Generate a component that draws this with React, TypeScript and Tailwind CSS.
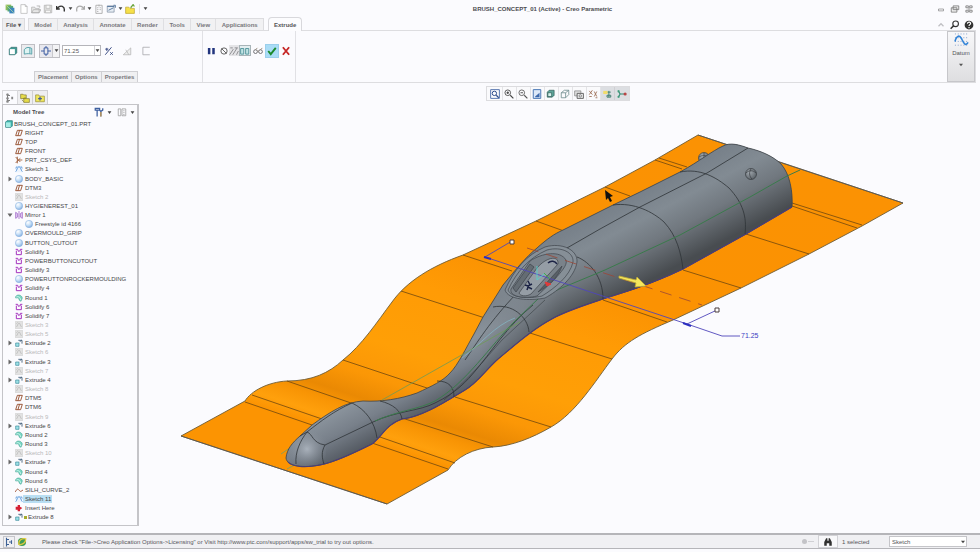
import React from "react";

type IconName =
  | "part" | "plane" | "csys" | "sketch" | "sketchOff" | "sphere" | "mirror"
  | "solidify" | "round" | "extrude" | "curve" | "insert";

type Node = { label: string; icon: IconName; depth?: 0 | 1 | 2; toggle?: "open" | "closed"; selected?: boolean; mark?: boolean };

const NODES: Node[] = [
  { label: "BRUSH_CONCEPT_01.PRT", icon: "part", depth: 0 },
  { label: "RIGHT", icon: "plane" },
  { label: "TOP", icon: "plane" },
  { label: "FRONT", icon: "plane" },
  { label: "PRT_CSYS_DEF", icon: "csys" },
  { label: "Sketch 1", icon: "sketch" },
  { label: "BODY_BASIC", icon: "sphere", toggle: "closed" },
  { label: "DTM3", icon: "plane" },
  { label: "Sketch 2", icon: "sketchOff" },
  { label: "HYGIENEREST_01", icon: "sphere" },
  { label: "Mirror 1", icon: "mirror", toggle: "open" },
  { label: "Freestyle id 4166", icon: "sphere", depth: 2 },
  { label: "OVERMOULD_GRIP", icon: "sphere" },
  { label: "BUTTON_CUTOUT", icon: "sphere" },
  { label: "Solidify 1", icon: "solidify" },
  { label: "POWERBUTTONCUTOUT", icon: "solidify" },
  { label: "Solidify 3", icon: "solidify" },
  { label: "POWERUTTONROCKERMOULDING", icon: "sphere" },
  { label: "Solidify 4", icon: "solidify" },
  { label: "Round 1", icon: "round" },
  { label: "Solidify 6", icon: "solidify" },
  { label: "Solidify 7", icon: "solidify" },
  { label: "Sketch 3", icon: "sketchOff" },
  { label: "Sketch 5", icon: "sketchOff" },
  { label: "Extrude 2", icon: "extrude", toggle: "closed" },
  { label: "Sketch 6", icon: "sketchOff" },
  { label: "Extrude 3", icon: "extrude", toggle: "closed" },
  { label: "Sketch 7", icon: "sketchOff" },
  { label: "Extrude 4", icon: "extrude", toggle: "closed" },
  { label: "Sketch 8", icon: "sketchOff" },
  { label: "DTM5", icon: "plane" },
  { label: "DTM6", icon: "plane" },
  { label: "Sketch 9", icon: "sketchOff" },
  { label: "Extrude 6", icon: "extrude", toggle: "closed" },
  { label: "Round 2", icon: "round" },
  { label: "Round 3", icon: "round" },
  { label: "Sketch 10", icon: "sketchOff" },
  { label: "Extrude 7", icon: "extrude", toggle: "closed" },
  { label: "Round 4", icon: "round" },
  { label: "Round 6", icon: "round" },
  { label: "SILH_CURVE_2", icon: "curve" },
  { label: "Sketch 11", icon: "sketch", selected: true },
  { label: "Insert Here", icon: "insert" },
  { label: "Extrude 8", icon: "extrude", toggle: "closed", mark: true },
];

const TREE_ART: Record<IconName, React.ReactNode> = {
  part: (<><path d="M1 3 3 1h8v8l-2 2H1z" fill="#3fb8b0" stroke="#1d6f70" /><path d="M1.500 3.500h7v7h-7z" fill="#a5ece4" /></>),
  plane: <path d="M3.600 2H11L8.400 10H1zM6.800 2 4.400 10" fill="none" stroke="#96502f" strokeWidth="1.4" />,
  csys: <path d="M1 1.500 5 6 1 10.500M3.500 1v10M5 6h6M8 3.500 5 6l3 3" fill="none" stroke="#9c5a36" strokeWidth="1.3" />,
  sketch: (<><path d="M1 1h10v10H1z" fill="#edf4fd" /><path d="M1 10C3 9 3 2.500 6 2.500S9 9 11 10M1 5l2-3M9 2l2 3" fill="none" stroke="#3f86d4" strokeWidth="1.2" /></>),
  sketchOff: (<><path d="M.5.5h11v11H.5z" fill="#e2e2e2" stroke="#d0d0d0" /><path d="M2 9C4 8 4 3 6 3s2 5 4 6M2 4l2-2" fill="none" stroke="#b4b4b4" /></>),
  sphere: <circle cx="6" cy="6" r="5.500" fill="url(#ball)" stroke="#86aede" strokeWidth=".7" />,
  mirror: <path d="M6 0v12M1 2l3 2v5L1 11zM11 2 8 4v5l3 2z" fill="#e3d0f4" stroke="#9a5bc4" strokeWidth="1.1" />,
  solidify: <path d="M2 4V10h7.500V4M1 2h3l1 3 3-1V2h3" fill="none" stroke="#a431bd" strokeWidth="1.5" />,
  round: (<><path d="M1 4C3 0 10 1 11 6L9 11 6 9C7 7 5 5 1 6z" fill="#79d8c4" stroke="#3a9b8b" strokeWidth=".8" /><path d="M2 4.500C5 3 8 5 8.500 9" fill="none" stroke="#eafffa" /></>),
  extrude: (<><path d="M1 6h5v5H1z" fill="#9ee3e8" stroke="#3a8a9a" /><path d="M5 2h5.500v5M7 4l3.500-2.500" fill="none" stroke="#4b6680" strokeWidth="1.4" /></>),
  curve: <path d="M0 9 3 5C5 3 7 9 9 8l3-2" fill="none" stroke="#a2573a" strokeWidth="1.4" />,
  insert: <path d="M4 1.500h3.500V4L11 6 7.500 8.500V11H4V8.500H1V4h3z" fill="#d51f33" />,
};

function TreeRow({ node }: { node: Node }) {
  const depth = node.depth ?? 1;
  const pad = depth === 0 ? "w-[2px]" : depth === 1 ? "w-3 pl-1" : "w-[22px]";
  const tone = node.icon === "sketchOff" ? "text-[#b9b9bb]" : "text-[#454547]";
  return (
    <li className="flex min-h-0 flex-1 items-center leading-[8px]">
      <span className={`flex shrink-0 justify-start ${pad}`}>
        {node.toggle && (
          <button aria-label={`Toggle ${node.label}`} className="h-[6px] w-[6px]">
            <svg viewBox="0 0 6 6" className="h-[6px] w-[6px]">
              <path d={node.toggle === "open" ? "M.5 1.500h5L3 5z" : "M1.500.5v5L5 3z"} fill="#666" />
            </svg>
          </button>
        )}
      </span>
      <svg viewBox="0 0 12 12" className="h-2 w-2 shrink-0">{TREE_ART[node.icon]}</svg>
      {node.mark && <span className="ml-px h-[3px] w-[3px] bg-[#a5ac2c]" />}
      <span className={`pr-px ${depth === 0 || node.mark ? "pl-px" : "pl-[2px]"} ${tone} ${node.selected ? "bg-[#b9def2]" : ""}`}>{node.label}</span>
    </li>
  );
}

type ArtProps = { children: React.ReactNode; label: string; className?: string; box?: string };
function Tool({ children, label, className = "", box = "h-[10px] w-[10px]" }: ArtProps) {
  return (
    <button aria-label={label} title={label} className={`flex shrink-0 items-center justify-center ${className}`}>
      <svg viewBox="0 0 16 16" fill="none" className={box}>{children}</svg>
    </button>
  );
}

const Caret = ({ label }: { label: string }) => (
  <Tool label={label} box="h-[5px] w-[5px]"><path d="M2 4h12L8 13z" fill="#444" /></Tool>
);

function TitleBar() {
  return (
    <header className="grid h-[17px] shrink-0 grid-cols-[9fr_auto_7fr] items-center">
      <div className="flex items-center pl-[5px]">
        <Tool label="Application" className="mr-1"><path d="M1 1h9v9H1z" fill="#8fbe59" /><path d="M4 3h9v9H4z" fill="#58a87a" /><path d="M7 6h8v9H7z" fill="#3d87bd" /><path d="m2 2 12 12" stroke="#cfe5a0" /></Tool>
        <Tool label="New" className="mr-[2px]"><path d="M3 1h7l3 3v11H3zM10 1v3h3" stroke="#aaa" fill="#fff" /></Tool>
        <Tool label="Open" className="mr-[2px]"><path d="M1 14V5h5l1 2h6v7zM1 14l3-5h12l-3 5zM9 3h5v3" stroke="#a5a5a5" fill="#e6e6e6" /></Tool>
        <Tool label="Save" className="mr-[3px]"><path d="M2 2h12v12H2z" fill="#ddd" stroke="#aaa" /><path d="M5 2h6v5H5zM4 10h8v4H4z" fill="#f7f7f7" stroke="#b4b4b4" /></Tool>
        <Tool label="Undo" className="mr-[2px]"><path d="M2 7c5-6 13-4 11 5M1 3v5h5" stroke="#333" strokeWidth="2.2" /></Tool>
        <Caret label="Undo history" />
        <Tool label="Redo" className="mr-[2px] ml-[2px]"><path d="M14 7C9 1 1 3 3 12M15 3v5h-5" stroke="#aaa" strokeWidth="2" /></Tool>
        <Caret label="Redo history" />
        <Tool label="Regenerate" className="mr-[2px] ml-[2px]"><path d="M3 2h10v13H3zM5 6h2M9 6h2M5 9h2M9 9h2M5 12h2M8 1v3" stroke="#aaa" strokeWidth="1.4" /></Tool>
        <Tool label="Windows" className="mr-[2px]"><path d="M2 3h11v10H2z" fill="#e7edf4" stroke="#6d7f94" /><path d="M2 4h11M4 10l8-4M12 2h3v4" stroke="#56789e" strokeWidth="1.5" /></Tool>
        <Caret label="Window list" />
        <Tool label="Close" className="mr-1 ml-[2px]"><path d="M1 5h5l2 2h7v8H1z" fill="#f6e04a" stroke="#b69b1e" /><path d="m9 6 4-5 2 3" stroke="#68a33a" strokeWidth="2" /></Tool>
        <span className="mr-[3px] h-[10px] w-px bg-[#e2e2e4]" />
        <Caret label="Customize toolbar" />
      </div>
      <h1 className="font-bold text-[#4c4c50]">BRUSH_CONCEPT_01 (Active) - Creo Parametric</h1>
      <div className="flex items-center justify-end gap-1 pr-[6px]">
        <Tool label="Minimize"><path d="M4 8h8v3H4z" stroke="#777" /></Tool>
        <Tool label="Restore"><path d="M5 3h9v6H5zM2 6h9v7H2z" stroke="#777" strokeWidth="1.3" fill="#eee" /></Tool>
        <Tool label="Close window"><path d="M3 3h4v3H3zM9 3h4v3H9zM3 10h4v3H3zM9 10h4v3H9zM6 8h4" stroke="#777" strokeWidth="1.3" /></Tool>
      </div>
    </header>
  );
}

const RIBBON_TABS = ["Model", "Analysis", "Annotate", "Render", "Tools", "View", "Applications"];

function RibbonTabs() {
  return (
    <nav className="flex h-[13px] shrink-0 items-end pl-[2px] font-bold text-[#77777b]">
      <button className="h-3 w-[23px] border border-b-0 border-[#dcdcdf] bg-[#eeeef0] text-[#555558]">File ▾</button>
      <div className="ml-[3px] flex h-3 w-[236px] border border-b-0 border-[#dcdcdf] bg-[#f1f1f3]">
        {RIBBON_TABS.map((t) => (
          <button key={t} className="flex-auto border-r border-[#dfdfe2] last:border-r-0">{t}</button>
        ))}
      </div>
      <button className="relative top-px ml-1 h-[14px] rounded-t-sm border border-b-0 border-[#d8d8dc] bg-[#fcfcfe] px-[5px] text-[#555558]">Extrude</button>
      <div className="ml-auto flex items-center gap-1 pr-[6px]">
        <Tool label="Minimize ribbon"><path d="m4 10 4-4 4 4" stroke="#c0c0c4" strokeWidth="2" /></Tool>
        <Tool label="Search"><circle cx="9" cy="6" r="4.500" stroke="#333" strokeWidth="1.8" /><path d="m6 9-5 5" stroke="#333" strokeWidth="2.4" /></Tool>
        <Tool label="Help"><circle cx="8" cy="8" r="7" fill="#333" /><path d="M5.500 6c0-4 6-3 5 0-.5 1.500-2.500 1.500-2.500 3.500M8 11v2" stroke="#fff" strokeWidth="1.8" /></Tool>
      </div>
    </nav>
  );
}

function Ribbon() {
  return (
    <section className="mr-1 ml-[2px] flex h-[53px] shrink-0 border border-[#dddde0]">
      <div className="flex w-[200px] flex-col justify-between border-r border-[#e1e1e5] pt-3">
        <div className="flex h-[15px] items-center pl-[5px]">
          <Tool label="Solid" className="mr-[3px]"><path d="m2 5 3-3h9v9l-3 3H2z" fill="#3f9b94" stroke="#2b6363" /><path d="M3 5h8v8H3z" fill="#fff" /></Tool>
          <Tool label="Surface" className="mr-1 h-[14px] w-[14px] border border-[#bfbfc4] bg-[#ececef]"><path d="M2 13V6c3-5 9-4 12-2v9c-3-1-8-1-12 0zM11 3v9" stroke="#4a9aa3" strokeWidth="1.4" fill="#dff4f3" /></Tool>
          <div className="mr-[2px] flex h-[14px] border border-[#bfbfc4] bg-[#f3f3f5]">
            <Tool label="Symmetric depth" className="w-[13px] border-r border-[#c9c9cd] bg-[#e8e8ee]"><path d="M5 3h6v10H5zM8 0v3M8 13v3M0 8h5M11 8h5" stroke="#2c4f9a" strokeWidth="1.4" /></Tool>
            <span className="flex w-[6px] justify-center"><Caret label="Depth options" /></span>
          </div>
          <div className="mr-[3px] flex h-[11px] w-[39px] items-center border border-[#b5b5ba] bg-white">
            <input aria-label="Depth" defaultValue="71.25" className="h-full w-8 min-w-0 bg-transparent pl-px text-[#55555a] outline-none" />
            <span className="flex h-full w-[6px] items-center justify-center border-l border-[#d2d2d6]"><Caret label="Recent depths" /></span>
          </div>
          <Tool label="Flip direction" className="mr-2"><path d="M2 14 12 2M2 5h5M4.500 3v5M10 10l4 4M14 10l-4 4" stroke="#33457f" strokeWidth="1.5" /></Tool>
          <Tool label="Remove material" className="mr-[9px]"><path d="M2 14 14 3v11zM6 6l5 8" stroke="#aaa" fill="#eee" /></Tool>
          <Tool label="Thicken"><path d="M14 2H3v12h11" stroke="#a9a9ad" strokeWidth="1.3" /></Tool>
        </div>
        <div className="flex h-[11px] pl-[31px] font-bold text-[#77777b]">
          {["Placement", "Options", "Properties"].map((t) => (
            <button key={t} className="-ml-px border border-b-0 border-[#cfcfd3] bg-[#f0f0f2] px-[3px] first:ml-0">{t}</button>
          ))}
        </div>
      </div>
      <div className="flex w-[93px] items-start border-r border-[#e1e1e5] pt-3">
        <div className="flex h-[15px] items-center pl-[3px]">
          <Tool label="Pause" className="mr-[3px]"><path d="M3 3h4v10H3zM10 3h4v10h-4z" fill="#22357e" /></Tool>
          <Tool label="No preview"><circle cx="8" cy="8" r="5" stroke="#666" strokeWidth="1.6" /><path d="m4 4 8 8" stroke="#666" strokeWidth="1.6" /></Tool>
          <Tool label="Unattached preview" className="h-[11px] bg-[#e4e4e7]"><path d="m1 14 6-9M6 14l7-11M12 14l3-6M2 3h4M9 3h5" stroke="#8c8c90" strokeWidth="1.5" /></Tool>
          <Tool label="Attached preview" className="h-[11px] border border-[#a8b4b8] bg-[#e3eef0]"><path d="M1 13V4h5v9zM9 13V4h5v9z" stroke="#4c8f96" fill="#c0e3e4" strokeWidth="1.4" /></Tool>
          <Tool label="Glasses" className="mx-[2px]"><circle cx="4" cy="9" r="3" stroke="#6b6b6e" strokeWidth="1.5" /><circle cx="12" cy="9" r="3" stroke="#6b6b6e" strokeWidth="1.5" /><path d="M7 8h2M4 6l3-3M12 6l3-3" stroke="#8a7a66" strokeWidth="1.3" /></Tool>
          <Tool label="Accept" className="h-[14px] w-[14px] border border-[#9bcfec] bg-[#a9dcf6]"><path d="m2 8 4 5 8-10" stroke="#1b8a2c" strokeWidth="3" /></Tool>
          <Tool label="Cancel" className="ml-[2px]"><path d="m3 2 10 12M13 2 3 14" stroke="#c62727" strokeWidth="3" /></Tool>
        </div>
      </div>
      <button className="ml-auto flex w-7 flex-col items-center border border-[#c6c6ca] bg-linear-to-b from-[#f8f8fa] to-[#dedee0] pt-px text-[#555558]">
        <svg viewBox="0 0 16 16" fill="none" className="h-[15px] w-[15px]">
          <path d="M1 1h14M1 5h14M1 9h14M1 13h14" stroke="#7f9cc8" strokeWidth="1" strokeDasharray="1 2" />
          <path d="M1 9C3 2 6 2 8 6s4 9 7 4" stroke="#3284d8" strokeWidth="1.700" />
        </svg>
        <span className="mt-px leading-[8px]">Datum</span>
        <svg viewBox="0 0 6 6" className="mt-[6px] h-1 w-1"><path d="M0 1h6L3 5z" fill="#555" /></svg>
      </button>
    </section>
  );
}

function ModelTree() {
  return (
    <aside className="ml-[2px] flex w-[137px] shrink-0 flex-col pt-[7px] pb-[7px]">
      <div className="flex h-[14px] shrink-0 items-stretch">
        <Tool label="Model Tree" className="w-4 border border-b-0 border-[#d9d9dc]"><path d="M4 1v14M4 4h4M4 12h4" stroke="#777" strokeWidth="1.5" /><path d="M2 1h4v3H2zM2 7h4v3H2zM2 12h4v3H2zM10 6h3v4h-3z" fill="#888" /></Tool>
        <Tool label="Folder Browser" className="w-[15px] border border-b-0 border-l-0 border-[#d0d0d3] bg-[#efeff1]"><path d="M1 2h4l1 1h4v6H1zM6 8h4l1 1h4v6H6z" fill="#e6dc4a" stroke="#77702a" /><path d="m3 11 3 3" stroke="#77702a" /></Tool>
        <Tool label="Favorites" className="w-[15px] border border-b-0 border-l-0 border-[#d0d0d3] bg-[#efeff1]"><path d="M1 3h5l1 2h8v9H1z" fill="#efe75c" stroke="#8d8326" /><path d="M8 6v6M5 9h6" stroke="#445a9a" strokeWidth="2" /></Tool>
      </div>
      <div className="flex min-h-0 flex-1 flex-col border border-r-2 border-[#c4c4c8] pb-[3px]">
        <div className="flex h-[14px] shrink-0 items-center pr-[2px] pl-[10px]">
          <h2 className="mr-auto font-bold text-[#4c4c50]">Model Tree</h2>
          <Tool label="Settings"><path d="M2 2h7v3H2zM5 5v10M11 15V7M9 2v3l2 2 3-2V2" stroke="#3d5f9f" strokeWidth="2" /><path d="M11 8v7" stroke="#c39447" strokeWidth="2" /></Tool>
          <span className="mr-[5px] ml-[3px] flex"><Caret label="Settings menu" /></span>
          <Tool label="Show"><path d="M2 3h4v11H2zM8 3h6v11H8zM10 6h2M10 9h2M10 12h2" stroke="#999" strokeWidth="1.2" /></Tool>
          <span className="ml-[3px] flex"><Caret label="Show menu" /></span>
        </div>
        <ul className="flex min-h-0 flex-1 flex-col">
          {NODES.map((n) => <TreeRow key={n.label} node={n} />)}
        </ul>
      </div>
    </aside>
  );
}

const cell = "h-[13px] w-[14px] border-r border-[#e3e3e6]";

function ViewToolbar() {
  return (
    <div className="mr-1 flex h-[15px] items-center self-center border border-[#dcdcdf] bg-[#fafafc] pl-[2px]">
      <Tool label="Refit" className={cell}><path d="M1 1h14v14H1z" stroke="#5b79b0" strokeWidth="1.6" /><circle cx="7" cy="7" r="3.500" stroke="#2d4d8d" strokeWidth="1.6" /><path d="m10 10 4 4" stroke="#2d4d8d" strokeWidth="2" /></Tool>
      <Tool label="Zoom in" className={cell}><circle cx="6" cy="6" r="4.500" stroke="#555" strokeWidth="1.5" /><path d="m10 10 5 5M4 6h4M6 4v4" stroke="#444" strokeWidth="1.8" /></Tool>
      <Tool label="Zoom out" className={cell}><circle cx="6" cy="6" r="4.500" stroke="#666" strokeWidth="1.5" /><path d="m10 10 5 5M4 6h4" stroke="#555" strokeWidth="1.8" /></Tool>
      <Tool label="Repaint" className={cell}><path d="M2 1h12v14H2z" fill="#dce8f8" stroke="#4c78b5" strokeWidth="1.6" /><path d="M5 12 12 6v7H5z" fill="#3c68ab" /></Tool>
      <Tool label="Display style" className={cell}><path d="m2 5 3-3h8v8l-3 3H2z" fill="#5ea59a" stroke="#25504c" /><path d="M3 6h6v6H3z" fill="#d6f3ee" stroke="#25504c" /></Tool>
      <Tool label="Saved orientations" className={cell}><path d="M2 6h7v8H2zM9 6l5-4v7l-5 5M2 6l5-4h7" stroke="#6f8c8e" strokeWidth="1.3" /></Tool>
      <Tool label="View manager" className={cell}><path d="M1 3h10v8H1z" fill="#ddd" stroke="#777" /><path d="M5 7h10v8H5z" fill="#eee" stroke="#555" strokeWidth="1.4" /><circle cx="10" cy="11" r="2" stroke="#555" /></Tool>
      <Tool label="Datum display" className={cell}><path d="m2 3 5 6M7 2 2 9M10 4l4 8M14 4l-4 8M2 12h4M12 14h3" stroke="#9d6e55" strokeWidth="1.4" /></Tool>
      <Tool label="Annotations" className="h-[13px] w-[14px] border-r border-[#cfcfd3] bg-[#dcdee2]"><path d="M2 3h7v5H2z" fill="#f1dc6b" /><path d="M9 5h5M11 3v10M8 10h6v3H8z" stroke="#3c7d6d" strokeWidth="1.5" /></Tool>
      <Tool label="Spin center" className="h-[13px] w-[14px] bg-[#dcdee2]"><path d="M5 8 2 3M5 8l-3 5M5 8h7" stroke="#2f8a72" strokeWidth="1.8" /><circle cx="13" cy="8" r="2.500" fill="#b84545" /><path d="M1 2h3v3H1zM1 11h3v3H1z" fill="#3f9b7b" /></Tool>
    </div>
  );
}

const SHEET =
  "M181 436 L245 401 C251 391 268 382 287 381 C312 381 329 373 343 360 C362 345 377 322 392 302 C407 281 432 266 463 255 L536 221 L605 187 L655 160 L698 135 L903 203 L862 226 L809 254 L741 288 L673 320 C640 334 625 342 612 359 C596 380 576 413 551 427 C532 438 512 446 493 447 C474 448 456 457 448 470 L387 504 Z";
const BODY =
  "M286 458 C287 449 292 443 300 436 L312 425 C330 412 345 402 363 401 C382 402 400 399 417 393 C432 386 443 381 450 373 C458 365 466 348 474 334 L483 317 L503 285 C517 268 526 257 537 248 C547 239 554 234 563 230 L583 220 L613 205 L640 192 L680 172 C700 161 712 151 723 146 C730 142 740 145 748 148 C762 151 774 157 781 164 C790 174 793 192 792 207 L746 234 L683 269 C650 285 625 292 603 299 C585 305 563 312 550 320 C530 331 515 345 497 360 C485 371 477 383 465 390 C445 402 422 417 402 419 C385 425 383 436 372 444 C352 454 335 462 320 465 C305 468 287 467 286 458 Z";

function Scene() {
  return (
    <svg viewBox="139 101 841 432" className="min-h-0 w-full flex-1" fill="none" role="img" aria-label="Brush model">
      <defs>
        <radialGradient id="ball" cx=".35" cy=".3" r=".8"><stop offset="0" stopColor="#fff" /><stop offset=".5" stopColor="#c5def6" /><stop offset="1" stopColor="#78a7dc" /></radialGradient>
        <radialGradient id="stud" cx=".35" cy=".3" r=".8"><stop offset="0" stopColor="#a4abb1" /><stop offset="1" stopColor="#555c62" /></radialGradient>
        <linearGradient id="sheet" gradientUnits="userSpaceOnUse" x1="245" y1="401" x2="367" y2="28">
          <stop offset="0" stopColor="#fc9402" /><stop offset=".03" stopColor="#ffa00c" /><stop offset=".07" stopColor="#f89404" /><stop offset=".1" stopColor="#ea8903" /><stop offset=".16" stopColor="#fb9706" /><stop offset=".25" stopColor="#ff9f06" /><stop offset=".42" stopColor="#ff9b05" /><stop offset=".55" stopColor="#fb9202" /><stop offset="1" stopColor="#fb9203" />
        </linearGradient>
        <linearGradient id="barrel" gradientUnits="userSpaceOnUse" x1="640" y1="193" x2="678" y2="265">
          <stop offset="0" stopColor="#78818a" /><stop offset=".3" stopColor="#828b93" /><stop offset=".6" stopColor="#71787f" /><stop offset="1" stopColor="#484c50" />
        </linearGradient>
        <linearGradient id="neck" gradientUnits="userSpaceOnUse" x1="652" y1="216" x2="684" y2="276">
          <stop offset="0" stopColor="#7c848c" /><stop offset=".35" stopColor="#8a939c" /><stop offset=".65" stopColor="#78808a" /><stop offset="1" stopColor="#555b63" />
        </linearGradient>
        <linearGradient id="fade" gradientUnits="userSpaceOnUse" x1="480" y1="0" x2="560" y2="0"><stop offset="0" stopColor="#000" /><stop offset="1" stopColor="#fff" /></linearGradient>
        <radialGradient id="nose" gradientUnits="userSpaceOnUse" cx="307" cy="449" r="21"><stop offset="0" stopColor="#a9b1bb" /><stop offset="1" stopColor="#808891" stopOpacity="0" /></radialGradient>
        <mask id="barrelMask" maskUnits="userSpaceOnUse" x="480" y="100" width="420" height="300"><path d="M480 100h420v300H480z" fill="url(#fade)" /></mask>
        <clipPath id="bodyClip"><path d={BODY} /></clipPath>
      </defs>

      <path d={SHEET} fill="url(#sheet)" stroke="#6d5b35" strokeWidth=".9" />
      <path d="M698 135 903 203M181 436 387 504" stroke="#565656" strokeWidth=".8" />
      <path
        d="M245 402 312 425M252 395 322 419M372 443 448 469M377 436 455 463M287 381 354 404M402 418 493 447M343 360 430 389M455 397 551 427M401 291 485 318M530 333 612 359M463 255 512 271M603 300 667 322M536 221 564 231M683 270 741 288M605 187 630 196M746 234 809 254M655 160 682 169M659 158 687 167M792 203 862 225M792 206 857 228"
        stroke="#70470f" strokeWidth=".8"
      />
      <path d="M281 454 300 441M287 469 325 449" stroke="#739f68" strokeWidth=".8" />

      <g stroke="#3c4044" strokeWidth=".7">
        <circle cx="704" cy="158" r="5.500" fill="url(#stud)" />
        <path d="M699 157c3-2 6-2 10 0M704 153v10" />
      </g>
      <path d={BODY} fill="url(#neck)" />
      <path d={BODY} fill="url(#barrel)" mask="url(#barrelMask)" />
      <path d="M280 420h46v50h-46z" fill="url(#nose)" clipPath="url(#bodyClip)" />
      <path d={BODY} stroke="#3e4347" strokeWidth=".8" />
      <path d="M792 207 746 234 683 269C650 285 625 292 603 299C585 305 563 312 550 320C530 331 515 345 497 360C485 371 477 383 465 390C445 402 422 417 402 419C385 425 383 436 372 444C352 454 335 462 320 465C305 468 292 467 288 462" stroke="#4b3d7c" strokeWidth="1.100" />

      <g stroke="#2f3437" strokeWidth=".8">
        <path d="M680 172C700 168 716 177 729 188C743 203 747 217 745 234" />
        <path d="M613 205C634 202 653 212 664 222C677 236 681 253 683 269" />
        <path d="M577 257C590 262 603 277 603 299" />
        <path d="M493 307C512 303 528 317 529 332" />
        <path d="M437 381C449 381 454 387 454 397" />
        <path d="M380 401C393 404 401 411 402 419" />
        <path d="M352 403C365 409 375 422 377 438" />
        <path d="M307 432C313 434 312 443 325 445C321 452 322 458 324 464M307 432C300 441 295 452 296 464M300 436 307 432C321 421 334 411 352 403" />
        <path d="M325 445 373 422C396 411 420 411 435 403C456 393 467 381 476 370C489 355 508 325 533 305" />
        <path d="M465 360C477 343 490 321 517 293M567 248 600 229 640 207 707 173 748 148" />
        <path d="M444 400C470 378 485 359 502 340L545 300" strokeWidth=".5" />
      </g>
      <path d="M382 400 520 322" stroke="#6f9c55" strokeWidth=".8" />
      <path d="M375 421C397 411 420 409 435 401C466 383 490 346 515 321L540 297 605 270 680 235 750 197 787 176 800 170" stroke="#3a7b4c" strokeWidth="1" />
      <path d="M462 358C480 345 495 325 515 318" stroke="#86c3d1" strokeWidth=".6" />

      {/* Rocker button recess */}
      <g stroke="#3d444a" strokeWidth=".7">
        <path d="M505 290C514 270 526 255 545 247C562 242 578 250 577 262C575 277 558 291 545 298C530 301 508 300 505 290Z" fill="#868f97" />
        <path d="M508 290C517 271 529 258 547 250C562 246 574 253 573 262C570 276 555 288 542 296C529 299 511 298 508 290Z" />
        <path d="M511 289 530 261C542 253 560 250 566 260C568 265 560 273 555 279L537 296C525 299 509 297 511 289Z" fill="#7a828a" />
        <path d="M519 293 537 268C545 258 559 254 558 264L531 294C526 297 520 296 519 293Z" fill="#959da5" />
        <path d="M538 292 562 266C559 276 549 286 538 292Z" fill="#596067" />
        <path d="M513 288 530 264 534 267 516 292Z" fill="#646c73" />
      </g>
      <path d="M548 263C551 260 555 261 557 264M525 285l3 1 4-2M527 290l1-3 4 2M528 281l2 4" stroke="#1c2345" strokeWidth="1.5" />

      {/* Depth dimension, rotation axis and direction arrow */}
      <path d="M527 248 702 305" stroke="#9a4636" strokeWidth=".8" strokeDasharray="12 8" />
      <path d="M512 241 485 257 687 324 717 310M687 324 722 336H740" stroke="#4f46bb" strokeWidth=".9" />
      <path d="m484 257 7 2M683 323l8 3" stroke="#2b2fc0" strokeWidth="2" />
      <path d="M510 240h4v4h-4zM715 308h4v4h-4z" fill="#fff" stroke="#4a3c3c" strokeWidth="1" />
      <path d="M537 266v14l7-6" stroke="#53d3cc" strokeWidth=".9" />
      <path d="m544 273 6 6" stroke="#3fae4d" strokeWidth="1" />
      <path d="m545 282 6 2-4 2z" fill="#e03a3a" stroke="#e03a3a" />
      <path d="m619 276 17 4 1-3 9 9-11 1 1-4-17-5z" fill="#f5e75d" stroke="#bfa936" strokeWidth=".8" />
      <text x="741" y="338" fill="#3c3cc2" className="text-[7px]">71.25</text>

      <g stroke="#33383c" strokeWidth=".7">
        <circle cx="751" cy="174" r="5.500" fill="url(#stud)" />
        <path d="M746 173c3-3 7-3 10 0M751 169c-2 3-2 7 1 10" />
      </g>
      <path d="m605 190 1 10 2-2 2 4 2-1-2-4 3-1z" fill="#111" />
    </svg>
  );
}

function StatusBar() {
  return (
    <footer className="flex h-4 shrink-0 items-center border-t-2 border-b border-[#b5b5b9] bg-[#f0f0f3] text-[#55555a]">
      <Tool label="Toggle tree" className="ml-[3px] h-3 w-3 border border-[#c5c5ca]"><path d="M4 1v14M4 4h4M4 12h4M12 5v6M8 8h4" stroke="#3f6296" strokeWidth="1.8" /></Tool>
      <Tool label="Toggle browser" className="ml-px h-3 w-3"><circle cx="8" cy="8" r="6.500" fill="#3d9c56" /><path d="M3 12C2 5 8 2 14 3c0 6-5 10-11 9z" stroke="#e3c83c" strokeWidth="2" /></Tool>
      <p className="ml-[14px] leading-[8px] whitespace-nowrap">Please check "File-&gt;Creo Application Options-&gt;Licensing" or Visit http://www.ptc.com/support/apps/sw_trial to try out options.</p>
      <div className="ml-auto flex items-center pr-[13px]">
        <span className="mr-px h-[5px] w-[5px] rounded-full bg-[#c3c3c7]" />
        <span className="mr-1 h-px w-[6px] bg-[#d0d0d4]" />
        <Tool label="Find" className="h-[13px] w-5 border border-[#d2d2d6] bg-[#f8f8fa]"><path d="M2 14V8l3-6h2v4h2V2h2l3 6v6h-4v-4H6v4z" fill="#303030" /></Tool>
        <span className="ml-1 w-[47px] whitespace-nowrap">1 selected</span>
        <div className="relative">
          <select aria-label="Selection filter" defaultValue="Sketch" className="block h-[11px] w-[78px] appearance-none border border-[#c5c5c9] bg-white pl-[2px] text-[#55555a]">
            <option>Sketch</option>
          </select>
          <svg viewBox="0 0 6 6" className="pointer-events-none absolute top-1 right-[2px] h-1 w-1"><path d="M0 1h6L3 5z" fill="#444" /></svg>
        </div>
      </div>
    </footer>
  );
}

export default function App() {
  return (
    <div className="flex h-screen min-h-[480px] flex-col overflow-hidden bg-[#fbfbfe] pb-[3px] font-['Liberation_Sans',Arial,sans-serif] text-[6px] leading-[10px]">
      <TitleBar />
      <RibbonTabs />
      <Ribbon />
      <main className="flex min-h-0 flex-1">
        <ModelTree />
        <div className="flex min-w-0 flex-1 flex-col pt-[3px]">
          <ViewToolbar />
          <Scene />
        </div>
      </main>
      <StatusBar />
    </div>
  );
}
